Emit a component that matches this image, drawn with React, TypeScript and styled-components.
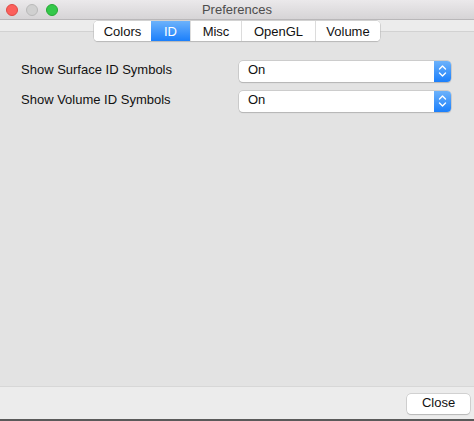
import React from "react";
import styled, { createGlobalStyle } from "styled-components";

const Global = createGlobalStyle`
  html, body { margin: 0; padding: 0; }
  body { font-family: "Liberation Sans", Arial, sans-serif; background: #e3e3e3; }
`;

const Window = styled.div`
  width: 474px;
  height: 421px;
  display: flex;
  flex-direction: column;
  background: #e3e3e3;
  overflow: hidden;
  position: relative;
`;

const TitleBar = styled.div`
  height: 20px;
  flex: none;
  display: flex;
  align-items: center;
  justify-content: center;
  position: relative;
  background: linear-gradient(#ebe9eb, #d6d4d6);
  border-bottom: 1px solid #b9b7b9;
  box-sizing: border-box;
`;

const Lights = styled.div`
  position: absolute;
  left: 6px;
  top: 4px;
  display: flex;
  gap: 8px;
`;

const Light = styled.span<{ $c: string; $b: string }>`
  width: 12px;
  height: 12px;
  border-radius: 50%;
  background: ${(p) => p.$c};
  box-sizing: border-box;
  border: 0.5px solid ${(p) => p.$b};
`;

const Title = styled.div`
  font-size: 13px;
  color: #4d4d4d;
`;

const Strip = styled.div`
  height: 11px;
  flex: none;
  background: #ececec;
  border-bottom: 1px solid #d2d2d2;
  position: relative;
`;

const TabsWrap = styled.div`
  position: absolute;
  left: 94px;
  top: 1px;
  display: flex;
  height: 20px;
  box-sizing: border-box;
  background: #fff;
  border-radius: 4px;
  box-shadow: 0 0 0 0.5px #b8b8b8, 0 1px 1px rgba(0, 0, 0, 0.18);
  overflow: hidden;
  z-index: 2;
`;

const Tab = styled.div<{ $w: number; $active?: boolean }>`
  width: ${(p) => p.$w}px;
  height: 100%;
  display: flex;
  align-items: center;
  justify-content: center;
  font-size: 13px;
  box-sizing: border-box;
  color: ${(p) => (p.$active ? "#fff" : "#111")};
  background: ${(p) => (p.$active ? "linear-gradient(#6cb2fb, #1b7ffb)" : "#fff")};
  border-left: ${(p) => (p.$active ? "none" : "1px solid #dcdcdc")};
  &:first-child { border-left: none; }
`;

const Content = styled.div`
  flex: 1;
  padding: 29px 23px 0 21px;
  display: flex;
  flex-direction: column;
  gap: 10px;
`;

const Row = styled.div`
  display: flex;
  align-items: center;
  justify-content: space-between;
  height: 20px;
`;

const Label = styled.div`
  font-size: 13px;
  color: #111;
  margin-bottom: 4px;
`;

const Select = styled.div`
  width: 212px;
  height: 21px;
  box-sizing: border-box;
  display: flex;
  background: #fff;
  border-radius: 4px;
  box-shadow: 0 0 0 0.5px #b5b5b5, 0 1px 1px rgba(0, 0, 0, 0.2);
  overflow: hidden;
`;

const SelectValue = styled.div`
  flex: 1;
  font-size: 13px;
  color: #111;
  padding-left: 9px;
  padding-bottom: 3px;
  display: flex;
  align-items: center;
`;

const Stepper = styled.div`
  width: 17px;
  background: linear-gradient(#6cb2fb, #1b7ffb);
  display: flex;
  align-items: center;
  justify-content: center;
`;

const Footer = styled.div`
  height: 32px;
  flex: none;
  background: #ececec;
  border-top: 1px solid #d7d7d7;
  border-bottom: 2px solid #5a5a5a;
  display: flex;
  align-items: center;
  justify-content: flex-end;
  padding-right: 4px;
`;

const Button = styled.div`
  width: 63px;
  height: 20px;
  box-sizing: border-box;
  padding-bottom: 3px;
  background: #fff;
  border-radius: 4px;
  box-shadow: 0 0 0 0.5px #b5b5b5, 0 1px 1px rgba(0, 0, 0, 0.2);
  font-size: 13px;
  color: #111;
  display: flex;
  align-items: center;
  justify-content: center;
  margin-top: 2px;
`;

const Arrows = () => (
  <svg width="9" height="14" viewBox="0 0 9 14">
    <path d="M1.5 5 L4.5 2 L7.5 5 M1.5 9 L4.5 12 L7.5 9" stroke="#fff" strokeWidth="1.4" fill="none" strokeLinecap="round" strokeLinejoin="round" />
  </svg>
);

const tabs = [
  { name: "Colors", w: 57 },
  { name: "ID", w: 39, active: true },
  { name: "Misc", w: 51 },
  { name: "OpenGL", w: 74 },
  { name: "Volume", w: 65 },
];

const rows = ["Show Surface ID Symbols", "Show Volume ID Symbols"];

export default function App() {
  return (
    <Window>
      <Global />
      <TitleBar>
        <Lights>
          <Light $c="#fc605c" $b="#de4a45" />
          <Light $c="#d0d0d0" $b="#b9b9b9" />
          <Light $c="#34c84a" $b="#26a934" />
        </Lights>
        <Title>Preferences</Title>
      </TitleBar>
      <Strip>
        <TabsWrap>
          {tabs.map((t) => (
            <Tab key={t.name} $w={t.w} $active={t.active}>
              {t.name}
            </Tab>
          ))}
        </TabsWrap>
      </Strip>
      <Content>
        {rows.map((r) => (
          <Row key={r}>
            <Label>{r}</Label>
            <Select>
              <SelectValue>On</SelectValue>
              <Stepper>
                <Arrows />
              </Stepper>
            </Select>
          </Row>
        ))}
      </Content>
      <Footer>
        <Button>Close</Button>
      </Footer>
    </Window>
  );
}
